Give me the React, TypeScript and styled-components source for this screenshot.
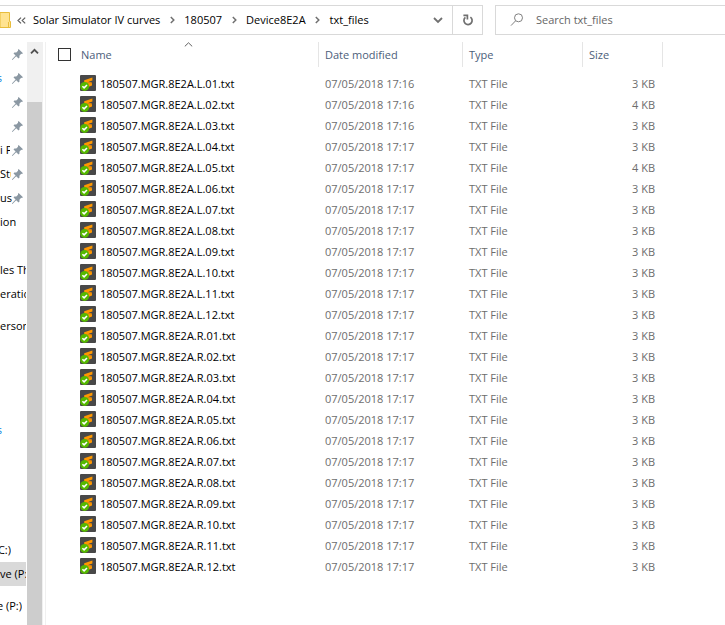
import React from 'react';
import styled, { createGlobalStyle } from 'styled-components';

const GlobalStyle = createGlobalStyle`
  * { box-sizing: border-box; }
  body {
    margin: 0;
    background: #fff;
    color: #000;
    font-family: "Open Sans", "Noto Sans", sans-serif;
    font-size: 11px;
    line-height: 16px;
    overflow: hidden;
  }
  button, input { font: inherit; color: inherit; }
`;

const Window = styled.div`
  display: flex;
  flex-direction: column;
  height: 100vh;
  overflow: hidden;
`;

const TopBar = styled.header`
  display: grid;
  grid-template-columns: 21fr 10fr;
  gap: 12px;
  padding-top: 5px;
  flex: none;
`;

const AddressBar = styled.div`
  display: flex;
  align-items: stretch;
  height: 30px;
  border: 1px solid #d9d9d9;
  border-left: 0;
  min-width: 0;
`;

const Crumbs = styled.nav`
  display: flex;
  align-items: center;
  flex: 1;
  min-width: 0;
  white-space: nowrap;
`;

const PlainButton = styled.button`
  display: flex;
  align-items: center;
  justify-content: center;
  border: 0;
  padding: 0;
  background: transparent;
`;

const FolderButton = styled(PlainButton)`
  width: 11px;
  margin-right: 4px;
`;

const OverflowButton = styled(PlainButton)`
  width: 12px;
  margin-right: 6px;
`;

const Crumb = styled.a`
  color: #000;
  text-decoration: none;
`;

const CrumbArrow = styled(PlainButton)`
  width: 24px;
`;

const HistoryButton = styled(PlainButton)`
  width: 29px;
`;

const RefreshButton = styled(PlainButton)`
  width: 30px;
  border-left: 1px solid #d9d9d9;
`;

const SearchBox = styled.label`
  display: flex;
  align-items: center;
  gap: 12px;
  height: 30px;
  padding-left: 14px;
  border: 1px solid #d9d9d9;
  border-right: 0;
  min-width: 0;
`;

const SearchInput = styled.input`
  flex: 1;
  min-width: 0;
  border: 0;
  padding: 0;
  outline: 0;
  background: transparent;
  &::placeholder { color: #666; opacity: 1; }
`;

const Body = styled.div`
  display: flex;
  flex: 1;
  min-height: 0;
  padding-top: 7px;
`;

const Sidebar = styled.nav`
  width: 27px;
  padding-right: 1px;
  overflow: hidden;
  flex: none;
`;

const NavLink = styled.a<{ $gap: number; $selected?: boolean }>`
  display: flex;
  align-items: center;
  height: 24px;
  margin-top: ${(p) => p.$gap}px;
  background: ${(p) => (p.$selected ? '#d9d9d9' : 'transparent')};
  color: #000;
  text-decoration: none;
`;

const NavLabel = styled.span<{ $width: number; $cutStart?: boolean; $blue?: boolean }>`
  display: flex;
  justify-content: ${(p) => (p.$cutStart ? 'flex-end' : 'flex-start')};
  width: ${(p) => p.$width}px;
  overflow: hidden;
  white-space: nowrap;
  flex: none;
  color: ${(p) => (p.$blue ? '#0a84e0' : 'inherit')};
`;

const PinSlot = styled.span`
  display: flex;
  margin-left: auto;
  padding-right: 3px;
`;

const Scrollbar = styled.div`
  display: flex;
  flex-direction: column;
  width: 16px;
  padding-right: 1px;
  background: #f0f0f0;
  flex: none;
`;

const ScrollUp = styled(PlainButton)`
  height: 18px;
`;

const Thumb = styled.div`
  flex: 1;
  margin-top: 42px;
  background: #cdcdcd;
`;

const Files = styled.main`
  flex: 1;
  min-width: 0;
  margin-left: 2px;
  border-left: 1px solid #f0f0f0;
  overflow: hidden;
`;

const FileTable = styled.table`
  table-layout: fixed;
  width: 617px;
  border-collapse: separate;
  border-spacing: 0;
`;

const Col = styled.col<{ $width: number }>`
  width: ${(p) => p.$width}px;
`;

const HeadCell = styled.th`
  position: relative;
  height: 25px;
  padding: 0 0 0 6px;
  border-right: 1px solid #e5e5e5;
  text-align: left;
  font-weight: 400;
  color: #4c607a;
  &:first-child { padding-left: 12px; }
`;

const HeadContent = styled.div`
  display: flex;
  align-items: center;
  gap: 10px;
`;

const SortMark = styled.span`
  position: absolute;
  top: 0;
  left: 12px;
  right: 0;
  display: flex;
  justify-content: center;
`;

const CheckAll = styled.input`
  appearance: none;
  width: 13px;
  height: 13px;
  margin: 0;
  border: 1px solid #333;
  background: #fff;
`;

const Rows = styled.tbody`
  &::before {
    content: '';
    display: block;
    height: 6px;
  }
`;

const Cell = styled.td<{ $align?: 'right' }>`
  height: 21px;
  padding: 0 8px 0 6px;
  text-align: ${(p) => p.$align ?? 'left'};
  color: #6d6d6d;
  white-space: nowrap;
`;

const NameCell = styled(Cell)`
  padding-left: 34px;
  color: #000;
`;

const FileName = styled.div`
  display: flex;
  align-items: flex-start;
  gap: 4px;
  line-height: 18px;
`;

const ChevronRight = () => (
  <svg width="5" height="8" viewBox="0 0 5 8" fill="none" stroke="#707070" strokeWidth="1.5">
    <path d="M.8 1 3.8 4 .8 7" />
  </svg>
);

const Pin = () => (
  <svg width="11" height="11" viewBox="0 0 11 11" fill="#8b98a3">
    <path d="M6.6 0 11 4.3 9.9 5 9.2 4.8 7.4 6.8 7.5 8.5 6.6 9.4 4.2 7.2.7 10.8 0 10.9.1 10.2 3.6 6.6 1.5 4.4 2.4 3.5 4.3 3.6 6.1 1.8 5.9 1z" />
  </svg>
);

const FileIcon = () => (
  <svg width="16" height="16" viewBox="0 0 16 16">
    <rect width="16" height="16" rx="1" fill="#484848" />
    <path d="M12.4 2.6v2.8L8.6 6.7l3.4 1.1v2.6L8 12V9.6L4.2 8V5.3z" fill="#ff9800" />
    <path d="m8.6 6.7 3.4 1.1v.9L5.6 7.2z" fill="#d98212" />
    <circle cx="4.6" cy="11.4" r="4.5" fill="#55b800" />
    <path d="m2.4 11.2 1.7 1.7 2.9-2.9" fill="none" stroke="#fff" strokeWidth="1.5" />
  </svg>
);

type NavItem = {
  text: string;
  width: number;
  gap?: number;
  pinned?: boolean;
  cutStart?: boolean;
  blue?: boolean;
  selected?: boolean;
};

const navItems: NavItem[] = [
  { text: '', width: 0, pinned: true },
  { text: 's', width: 2, pinned: true, cutStart: true, blue: true },
  { text: '', width: 0, pinned: true },
  { text: '', width: 0, pinned: true },
  { text: 'i P', width: 10, pinned: true },
  { text: 'Stu', width: 11, pinned: true },
  { text: 'us', width: 12, pinned: true },
  { text: 'ion', width: 26 },
  { text: 'les Th', width: 26, gap: 24 },
  { text: 'eratio', width: 26 },
  { text: 'erson', width: 26, gap: 8 },
  { text: 's', width: 2, gap: 80, cutStart: true, blue: true },
  { text: 'C:)', width: 11, gap: 96, cutStart: true },
  { text: 've (P:)', width: 26, selected: true },
  { text: 'e (P:)', width: 22, gap: 8, cutStart: true },
];

const crumbs = ['Solar Simulator IV curves', '180507', 'Device8E2A', 'txt_files'];

const files = ['L', 'R'].flatMap((side) =>
  Array.from({ length: 12 }, (_, i) => {
    const n = i + 1;
    return {
      name: `180507.MGR.8E2A.${side}.${String(n).padStart(2, '0')}.txt`,
      date: `07/05/2018 17:${side === 'L' && n <= 3 ? 16 : 17}`,
      size: side === 'L' && (n === 2 || n === 5) ? '4 KB' : '3 KB',
    };
  }),
);

export default function App() {
  return (
    <>
      <GlobalStyle />
      <Window>
        <TopBar>
          <AddressBar>
            <Crumbs aria-label="Address">
              <FolderButton aria-label="Folder">
                <svg width="11" height="16" viewBox="0 0 11 16">
                  <path d="M0 .5h9.5v9h1v6H0z" fill="#ffe391" stroke="#e8bd3c" />
                  <path d="M8.5 10v5" stroke="#e8bd3c" />
                </svg>
              </FolderButton>
              <OverflowButton aria-label="Parent folders">
                <svg width="9" height="7" viewBox="0 0 9 7" fill="none" stroke="#606060" strokeWidth="1.2">
                  <path d="M4 .6 1 3.5l3 2.9M8.2.6l-3 2.9 3 2.9" />
                </svg>
              </OverflowButton>
              {crumbs.map((crumb, i) => (
                <React.Fragment key={crumb}>
                  {i > 0 && (
                    <CrumbArrow aria-label={`Open ${crumb}`}>
                      <ChevronRight />
                    </CrumbArrow>
                  )}
                  <Crumb href="#">{crumb}</Crumb>
                </React.Fragment>
              ))}
            </Crumbs>
            <HistoryButton aria-label="Previous locations">
              <svg width="10" height="7" viewBox="0 0 10 7" fill="none" stroke="#707070" strokeWidth="1.8">
                <path d="m1 1 4 4 4-4" />
              </svg>
            </HistoryButton>
            <RefreshButton aria-label="Refresh">
              <svg width="12" height="12" viewBox="0 0 12 12" fill="none" stroke="#707070" strokeWidth="1.7">
                <path d="M8.4 3.1A4.1 4.1 0 1 1 3.4 3.3M1.4 1.4h4v4" />
              </svg>
            </RefreshButton>
          </AddressBar>
          <SearchBox>
            <svg width="14" height="14" viewBox="0 0 14 14" fill="none" stroke="#808080">
              <circle cx="8.5" cy="4.8" r="4" />
              <path d="M5.6 7.8 1 12.6" />
            </svg>
            <SearchInput type="search" placeholder="Search txt_files" aria-label="Search txt_files" />
          </SearchBox>
        </TopBar>
        <Body>
          <Sidebar aria-label="Folders">
            {navItems.map((item, i) => (
              <NavLink
                key={i}
                href="#"
                $gap={item.gap ?? 0}
                $selected={item.selected}
                aria-label={item.text || 'Pinned folder'}
              >
                <NavLabel $width={item.width} $cutStart={item.cutStart} $blue={item.blue}>
                  {item.text}
                </NavLabel>
                {item.pinned && (
                  <PinSlot>
                    <Pin />
                  </PinSlot>
                )}
              </NavLink>
            ))}
          </Sidebar>
          <Scrollbar>
            <ScrollUp aria-label="Scroll up">
              <svg width="9" height="7" viewBox="0 0 9 7" fill="none" stroke="#505050" strokeWidth="1.8">
                <path d="m1 5.4 3.5-3.6L8 5.4" />
              </svg>
            </ScrollUp>
            <Thumb />
          </Scrollbar>
          <Files>
            <FileTable>
              <colgroup>
                <Col $width={273} />
                <Col $width={144} />
                <Col $width={120} />
                <Col $width={80} />
              </colgroup>
              <thead>
                <tr>
                  <HeadCell>
                    <SortMark>
                      <svg width="9" height="5" viewBox="0 0 9 5" fill="none" stroke="#606060">
                        <path d="m.8 4.4 3.7-3.6 3.7 3.6" />
                      </svg>
                    </SortMark>
                    <HeadContent>
                      <CheckAll type="checkbox" aria-label="Select all" />
                      Name
                    </HeadContent>
                  </HeadCell>
                  <HeadCell>Date modified</HeadCell>
                  <HeadCell>Type</HeadCell>
                  <HeadCell>Size</HeadCell>
                </tr>
              </thead>
              <Rows>
                {files.map((file) => (
                  <tr key={file.name}>
                    <NameCell>
                      <FileName>
                        <FileIcon />
                        {file.name}
                      </FileName>
                    </NameCell>
                    <Cell>{file.date}</Cell>
                    <Cell>TXT File</Cell>
                    <Cell $align="right">{file.size}</Cell>
                  </tr>
                ))}
              </Rows>
            </FileTable>
          </Files>
        </Body>
      </Window>
    </>
  );
}
